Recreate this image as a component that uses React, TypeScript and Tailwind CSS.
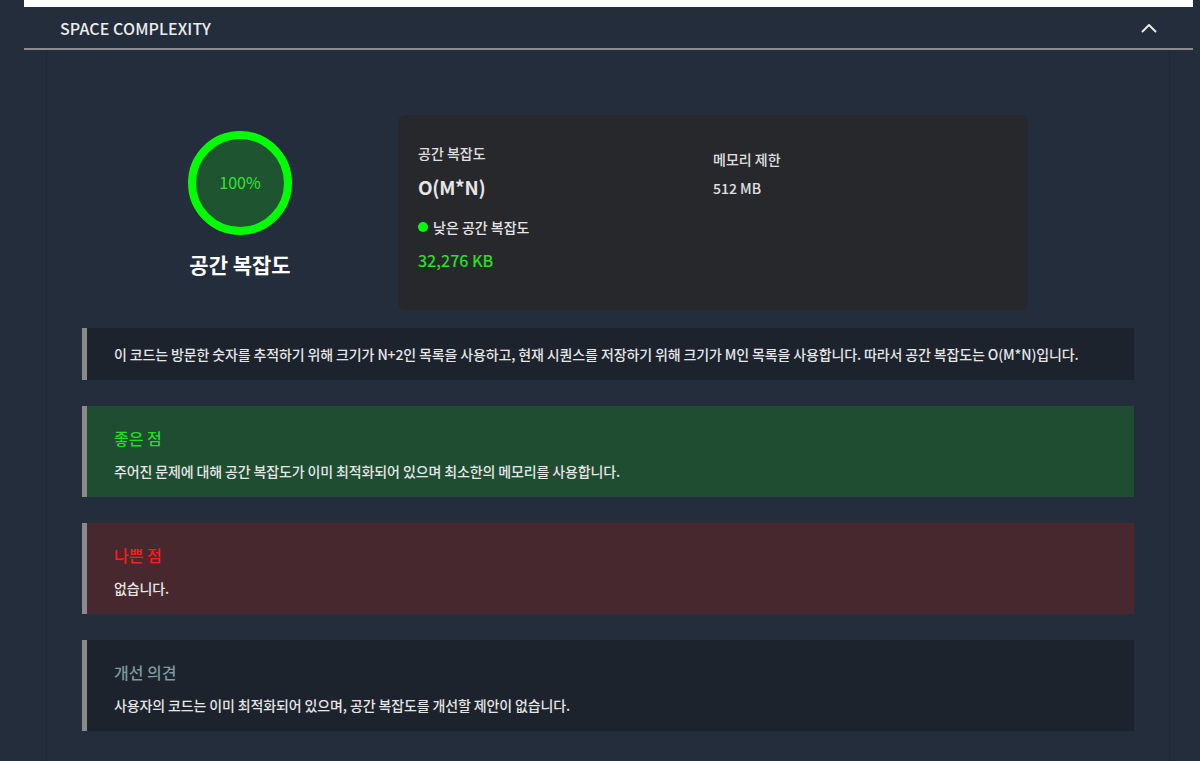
import React from "react";

type TNoteProps = {
  title?: string;
  titleClass?: string;
  bg: string;
  children: React.ReactNode;
};

const FONT = { fontFamily: '"Noto Sans CJK KR", "Noto Sans", sans-serif' };

// 좌측 회색 바가 있는 설명 블록
const Note = ({ title, titleClass, bg, children }: TNoteProps) => (
  <div className={`border-l-[5px] border-[#8a8a8a] pl-[27px] pr-6 ${bg}`}>
    {title ? (
      <div className="pt-5 pb-4">
        <div className={`text-[16px] leading-[24px] font-medium ${titleClass}`}>
          {title}
        </div>
        <div className="mt-[11px] text-[14px] leading-[20px] font-medium tracking-[-0.13px] text-[#e6e6e6]">
          {children}
        </div>
      </div>
    ) : (
      <div className="py-4 text-[14px] leading-[20px] font-medium tracking-[-0.13px] text-[#e6e6e6]">
        {children}
      </div>
    )}
  </div>
);

const ScoreRing = ({ percent }: { percent: number }) => (
  <div className="flex h-[104px] w-[104px] items-center justify-center rounded-full border-[8px] border-[#00ff00] bg-[#1e5530]">
    <span className="-mt-[3px] text-[16px] leading-[24px] text-[#2ee82e]">
      {percent}%
    </span>
  </div>
);

const App = () => {
  return (
    <div className="min-h-screen bg-[#232d3b]" style={FONT}>
      <div className="ml-[24px] w-[1169px]">
        <div className="h-[7px] bg-white" />

        {/* 섹션 헤더 */}
        <div className="flex h-[43px] items-center justify-between border-b-2 border-[#8c8c8c] pl-[36px] pr-[36px]">
          <span className="text-[16px] font-medium tracking-[0.1px] text-[#ececec]">
            SPACE COMPLEXITY
          </span>
          <svg width="16" height="10" viewBox="0 0 16 10" fill="none">
            <path
              d="M1.5 8.5 L8 2 L14.5 8.5"
              stroke="#e8e8e8"
              strokeWidth="2"
              strokeLinecap="round"
              strokeLinejoin="round"
            />
          </svg>
        </div>

        <div className="ml-[22px] w-[1124px] border-x border-[#1f2834] px-[35px] pt-[65px] pb-8">
          {/* 요약 영역 */}
          <div className="flex">
            <div className="flex w-[316px] flex-col items-center pt-4">
              <ScoreRing percent={100} />
              <div className="mt-[14px] text-[21px] leading-[30px] font-bold text-white">
                공간 복잡도
              </div>
            </div>

            <div className="grid h-[195px] w-[630px] grid-cols-2 rounded-lg bg-[#27282c] px-5">
              <div className="pt-[28px]">
                <div className="text-[14px] leading-[20px] font-medium text-[#e0e0e0]">
                  공간 복잡도
                </div>
                <div className="mt-[10px] text-[19px] leading-[28px] font-semibold tracking-[-0.3px] text-[#e6e6e6]">
                  O(M*N)
                </div>
                <div className="mt-[16px] flex items-center gap-[5px] text-[14px] leading-[20px] font-medium text-[#e6e6e6]">
                  <span className="h-[10px] w-[10px] rounded-full bg-[#00ff00]" />
                  낮은 공간 복잡도
                </div>
                <div className="mt-[11px] text-[16px] leading-[24px] font-medium text-[#22e022]">
                  32,276 KB
                </div>
              </div>
              <div className="pt-[34px]">
                <div className="text-[14px] leading-[20px] font-medium text-[#e0e0e0]">
                  메모리 제한
                </div>
                <div className="mt-[9px] text-[14px] leading-[20px] font-medium text-[#e0e0e0]">
                  512 MB
                </div>
              </div>
            </div>
          </div>

          {/* 설명 블록 */}
          <div className="mt-[18px] flex flex-col gap-[26px]">
            <Note bg="bg-[#1c232d]">
              이 코드는 방문한 숫자를 추적하기 위해 크기가 N+2인 목록을 사용하고, 현재 시퀀스를 저장하기 위해 크기가 M인 목록을 사용합니다. 따라서 공간 복잡도는 O(M*N)입니다.
            </Note>
            <Note title="좋은 점" titleClass="text-[#22dd22]" bg="bg-[#1e4d31]">
              주어진 문제에 대해 공간 복잡도가 이미 최적화되어 있으며 최소한의 메모리를 사용합니다.
            </Note>
            <Note title="나쁜 점" titleClass="text-[#ff1c1c]" bg="bg-[#47282f]">
              없습니다.
            </Note>
            <Note title="개선 의견" titleClass="text-[#7d9a9c]" bg="bg-[#1c232d]">
              사용자의 코드는 이미 최적화되어 있으며, 공간 복잡도를 개선할 제안이 없습니다.
            </Note>
          </div>
        </div>
      </div>
    </div>
  );
};

export default App;
